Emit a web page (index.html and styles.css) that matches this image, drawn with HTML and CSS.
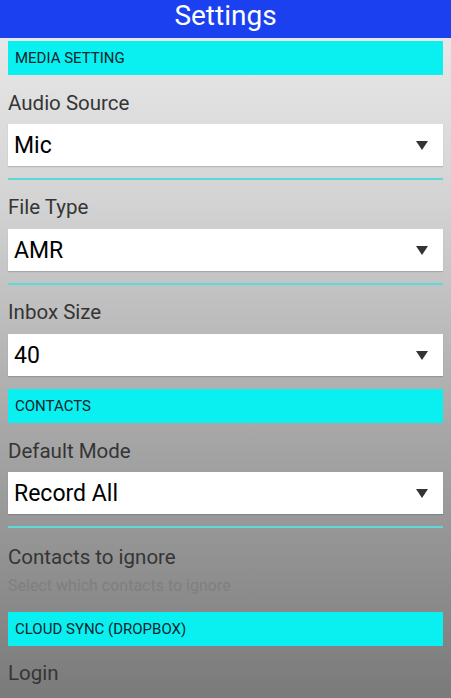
FILE: index.html
```html
<!DOCTYPE html>
<html>
  <head>
  <meta charset="utf-8">
  <title>Settings</title>
  <link rel="stylesheet" href="styles.css">
  </head>
  <body>

<div class="titlebar">Settings</div>

<div class="prefs">

  <div class="cat">MEDIA SETTING</div>

  <div class="label">Audio Source</div>
  <div class="select"><span>Mic</span><i class="arrow"></i></div>
  <div class="sep"></div>

  <div class="label">File Type</div>
  <div class="select"><span>AMR</span><i class="arrow"></i></div>
  <div class="sep"></div>

  <div class="label">Inbox Size</div>
  <div class="select"><span>40</span><i class="arrow"></i></div>

  <div class="cat cat-gap">CONTACTS</div>

  <div class="label">Default Mode</div>
  <div class="select"><span>Record All</span><i class="arrow"></i></div>
  <div class="sep"></div>

  <div class="item">
    <div class="item-title">Contacts to ignore</div>
    <div class="item-sub">Select which contacts to ignore</div>
  </div>

  <div class="cat">CLOUD SYNC (DROPBOX)</div>

  <div class="item item-last">
    <div class="item-title">Login</div>
  </div>

</div>

  </body>
</html>
```

FILE: styles.css
```css
html, body {height:100%;}
body {margin:0; overflow:hidden; font-family:Roboto, "Noto Sans", sans-serif; background:linear-gradient(#ececec 0%, #d2d2d2 30%, #a9a9a9 60%, #7a7a7a 100%);}
.titlebar {height:38px; line-height:32px; background-color:#1b40f0; color:#fff; text-align:center; font-size:28px;}
.prefs {padding:3px 8px 0 8px;}
.cat {height:34px; line-height:34px; background-color:#0af0f0; color:#10242c; font-size:15px; padding-left:7px;}
.cat-gap {margin-top:13px;}
.label {height:49px; line-height:56px; font-size:20.5px; color:#353535;}
.sep + .label {height:49px; line-height:55px;}
.select {height:42px; background-color:#fff; display:flex; align-items:center; justify-content:space-between; padding:0 15px 0 6px; font-size:23px; color:#000; box-shadow:0 1px 1px rgba(0,0,0,0.15);}
.arrow {width:0; height:0; border-left:6px solid transparent; border-right:6px solid transparent; border-top:9px solid #333;}
.sep {height:2px; background-color:#5fd8d8; margin-top:12px;}
.item {padding:15px 0 11px 0;}
.item-last {padding-top:13px;}
.item-title {font-size:20.5px; color:#353535; line-height:28px;}
.item-sub {font-size:16px; color:#7f7f7f; line-height:30px;}
```
